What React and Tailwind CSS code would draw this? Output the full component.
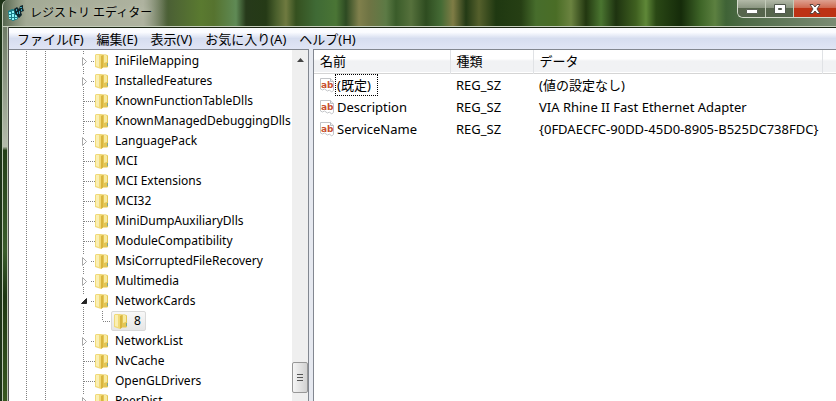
import clsx from 'clsx';

const treeItems = [
   { name: 'IniFileMapping', state: 'closed' },
   { name: 'InstalledFeatures', state: 'closed' },
   { name: 'KnownFunctionTableDlls' },
   { name: 'KnownManagedDebuggingDlls' },
   { name: 'LanguagePack', state: 'closed' },
   { name: 'MCI' },
   { name: 'MCI Extensions' },
   { name: 'MCI32' },
   { name: 'MiniDumpAuxiliaryDlls' },
   { name: 'ModuleCompatibility' },
   { name: 'MsiCorruptedFileRecovery', state: 'closed' },
   { name: 'Multimedia', state: 'closed' },
   { name: 'NetworkCards', state: 'open' },
   { name: '8', child: true },
   { name: 'NetworkList', state: 'closed' },
   { name: 'NvCache' },
   { name: 'OpenGLDrivers' },
   { name: 'PeerDist', state: 'closed' },
];

const values = [
   { name: '(既定)', type: 'REG_SZ', data: '(値の設定なし)', focused: true },
   { name: 'Description', type: 'REG_SZ', data: 'VIA Rhine II Fast Ethernet Adapter' },
   { name: 'ServiceName', type: 'REG_SZ', data: '{0FDAECFC-90DD-45D0-8905-B525DC738FDC}' },
];

const menus = ['ファイル(F)', '編集(E)', '表示(V)', 'お気に入り(A)', 'ヘルプ(H)'];

const RegeditIcon = () => (
   <svg className="w-4 h-4 shrink-0" viewBox="0 0 16 16" aria-hidden="true">
      <path d="M0 6l4-2 5 1 1 9-5 2-4-2z" fill="#1b7f8a" />
      <path d="M1 7h2v2H1zM4 6h2v2H4zM1 10h2v2H1zM4 9h2v3H4zM7 10h2v2H7zM1 13h2v1H1zM4 13h2v2H4zM7 13h2v1H7z" fill="#8df6fa" />
      <path d="M6 4l3-2 2 2 1-3 3-1v3l1 3-3 1 1 3-3 3-2-2-2-3z" fill="#10282f" />
      <path d="M8 4h1v2H8zM12 2h2v1h-2zM11 6h1v3h-1zM13 4h1v2h-1zM9 7h1v2H9z" fill="#3fa9bb" />
   </svg>
);

const Folder = () => (
   <svg className="w-[14px] h-4 shrink-0" viewBox="0 0 14 16" aria-hidden="true">
      <path d="M6 1.500h5l2 1V14l-1 .5H6z" fill="#e4c655" />
      <path d="M9 2h2l1 1v6l-3 1z" fill="#f7eaa0" />
      <path d="M0 2l1-1h5l2 1v12.500L6 16l-6-2z" fill="#f1da78" />
      <path d="M1 2h3v12l-3-1z" fill="#faefb4" />
      <path d="M6 3l2-1v12.500L6 16z" fill="#d9b53f" />
      <path d="M12 10h1v3h-1z" fill="#7fa88a" />
   </svg>
);

const StringIcon = () => (
   <svg className="w-4 h-4 shrink-0" viewBox="0 0 16 16" aria-hidden="true">
      <path d="M1.500 1.500h10l3 3v9l-2 1.500-2-2-2 1-3-2-2 1-2-1z" fill="#fff" stroke="#c3c5c8" />
      <path d="M11.500 1.500v3h3" fill="#eee" stroke="#b9bcc0" />
      <text x="2" y="11" className="font-['DejaVu_Sans'] text-[9px] font-bold" fill="#c8502f">ab</text>
   </svg>
);

// Dotted guide lines and the expander in front of each key
const Guides = ({ state, child }) => (
   <svg
      className={clsx('h-5 shrink-0', child ? 'w-[102px]' : 'w-[86px]')}
      viewBox={child ? '0 0 102 20' : '0 0 86 20'}
      aria-hidden="true"
   >
      <g stroke="#808080" strokeDasharray="1 1" fill="none">
         <path d="M17.500 0v20M36.500 0v20" />
         {state ? <path d="M74.500 0v4M74.500 16v4M82 10.500h4" /> : <path d="M74.500 0v20" />}
         {!state && !child && <path d="M75 10.500h11" />}
         {child && <path d="M93.500 0v10M94 10.500h8" />}
      </g>
      {state === 'closed' && <path d="M73.500 6.500l4 4-4 4z" fill="#fff" stroke="#a6a6a6" />}
      {state === 'open' && <path d="M77.500 7.500v5h-5z" fill="#262626" stroke="#262626" />}
   </svg>
);

const TreeRow = ({ name, state, child }) => (
   <li className="flex h-5 items-center whitespace-nowrap">
      <Guides state={state} child={child} />
      <button
         className={clsx(
            'flex h-5 items-center gap-1.5',
            child && 'rounded-xs border border-[#d9d9d9] bg-linear-to-b from-[#f8f8f8] to-[#e6e6e6] pl-0.5 pr-1'
         )}
      >
         <Folder />
         {name}
      </button>
   </li>
);

const TitleBar = () => (
   <header className="ml-0.5 flex h-[27px] shrink-0 items-start justify-between overflow-hidden rounded-tl-md border-b border-l border-[#c5cdbb] bg-[linear-gradient(90deg,#56674f_0px,#68755c_20px,#6f7c60_140px,#4a5e35_163px,#5a7a30_198px,#56732f_211px,#5f8a55_233px,#26391a_243px,#253a16_263px,#4a5f2c_273px,#6f7a40_283px,#35501f_293px,#3f6a35_313px,#4a7535_333px,#2d4a22_343px,#80804c_356px,#6f7444_366px,#5c7a45_383px,#3a5c2a_393px,#56713c_408px,#2e4c20_423px,#456b35_438px,#7f7c45_450px,#233a15_463px,#55602c_476px,#1f3811_493px,#263f14_518px,#476d2c_533px,#4a6d26_553px,#6b8340_568px,#223710_583px,#4a7530_598px,#1e3310_613px,#3f6020_633px,#5f8838_643px,#2a4815_653px,#152b0a_678px,#3f6628_698px,#5c8040_712px,#3f6336_723px,#4f6b48_743px,#7c8c74_834px)]">
      <div className="flex h-[26px] items-center gap-1.5 bg-[linear-gradient(90deg,transparent_0%,#a3aa95_14%,#aeb29f_85%,transparent_100%)] pl-[5px] pr-4">
         <RegeditIcon />
         <h1 className="text-[12px] [text-shadow:0_0_6px_#d5d8c8]">レジストリ エディター</h1>
      </div>
      <div className="flex h-[18px] overflow-hidden rounded-bl-md border-b border-l border-[#d5dbcd]">
         <button aria-label="最小化" className="flex w-7 items-center justify-center border-r border-[#c3cbb9] bg-linear-to-b from-[#b3baa8] from-0% via-[#8d9783] via-45% to-[#56654c] to-50%">
            <svg className="mt-1 h-3 w-3" viewBox="0 0 12 12"><path d="M.5 4.500h11v4H.5z" fill="#fff" stroke="#5b6356" /></svg>
         </button>
         <button aria-label="最大化" className="flex w-7 items-center justify-center border-r border-[#c3cbb9] bg-linear-to-b from-[#b3baa8] from-0% via-[#8d9783] via-45% to-[#56654c] to-50%">
            <svg className="h-3 w-3" viewBox="0 0 12 12"><path d="M.5 1.500h11v9H.5z M4.500 5.500v1h3v-1z" fill="#fff" stroke="#50584c" fillRule="evenodd" /></svg>
         </button>
         <button aria-label="閉じる" className="flex w-[42px] items-center justify-center bg-linear-to-b from-[#dda090] from-0% via-[#cf6a52] via-45% to-[#bd3214] to-50%">
            <svg className="h-3 w-3" viewBox="0 0 12 12"><path d="M1 1.500h3l2 2.500 2-2.500h3L8 6l3 4.500H8L6 8l-2 2.500H1L4 6z" fill="#fff" stroke="#5b4540" /></svg>
         </button>
      </div>
   </header>
);

const MenuBar = () => (
   <nav className="flex h-[22px] shrink-0 items-center gap-[13px] border-t border-[#1b2614] bg-linear-to-b from-[#fbfcff] from-20% via-[#d6ddef] via-50% to-[#e0e5f5] pl-2">
      {menus.map((menu) => (
         <button key={menu} className="whitespace-nowrap">{menu}</button>
      ))}
   </nav>
);

const ScrollBar = () => (
   <div className="flex w-4 shrink-0 flex-col justify-between bg-[#efefef] pb-2">
      <button aria-label="上へスクロール" className="flex h-5 items-center justify-center">
         <svg className="h-1 w-[7px]" viewBox="0 0 7 4"><path d="M0 4l3.500-4L7 4z" fill="#444" /></svg>
      </button>
      <button aria-label="スクロール位置" className="flex h-[31px] items-center justify-center rounded-xs border border-[#979797] bg-linear-to-r from-[#f5f5f5] to-[#d2d2d2]">
         <svg className="h-2 w-2" viewBox="0 0 8 8"><path d="M1 .5h6M1 3.500h6M1 6.500h6" stroke="#555" /></svg>
      </button>
   </div>
);

const ValueTable = () => (
   <table className="w-full table-fixed border-collapse text-left">
      <colgroup>
         <col className="w-[136px]" />
         <col className="w-[83px]" />
         <col className="w-[289px]" />
         <col />
      </colgroup>
      <thead>
         <tr className="h-[23px] border-b border-[#d5d5d5] bg-linear-to-b from-white from-40% to-[#f1f2f4] to-50%">
            {['名前', '種類', 'データ'].map((title) => (
               <th key={title} className="border-r border-[#e0e2e5] p-0 pl-1.5 font-normal">{title}</th>
            ))}
            <td />
         </tr>
      </thead>
      <tbody>
         {values.map((value) => (
            <tr key={value.name} className="h-[22px] whitespace-nowrap">
               <td className="p-0 pl-[5px]">
                  <div className="flex items-center">
                     <StringIcon />
                     <span className={clsx('h-[22px] border border-dotted px-px leading-5', value.focused ? 'border-black pr-1.5' : 'border-transparent')}>
                        {value.name}
                     </span>
                  </div>
               </td>
               <td className="p-0 pl-1.5">{value.type}</td>
               <td className="p-0 pl-1.5">{value.data}</td>
               <td />
            </tr>
         ))}
      </tbody>
   </table>
);

const App = () => {
   return (
      <div className="flex h-screen flex-col overflow-hidden bg-[#1d3317] font-['Noto_Sans','Noto_Sans_CJK_JP',sans-serif] text-[13px] leading-5 text-black">
         <TitleBar />
         <div className="flex min-h-0 flex-1">
            <div className="flex w-2 shrink-0 pl-0.5">
               <div className="flex-1 border-x border-[#b9c4b0] bg-[linear-gradient(180deg,#6f7c66_0%,#b4bbab_32%,#243f17_33%,#3a5c2c_60%,#1d3612_72%,#38581f_100%)]" />
            </div>
            <div className="flex min-w-0 flex-1 flex-col border-l border-[#555]">
               <MenuBar />
               <main className="flex min-h-0 flex-1 gap-1 bg-[#e6e9f0]">
                  <section className="flex w-[300px] shrink-0 overflow-hidden border-t border-r border-[#828790] bg-white">
                     <ul className="min-w-0 flex-1 overflow-hidden pt-px text-[12px]">
                        {treeItems.map((item) => <TreeRow key={item.name} {...item} />)}
                     </ul>
                     <ScrollBar />
                  </section>
                  <section className="min-w-0 flex-1 overflow-hidden border-t border-l border-[#828790] bg-white">
                     <ValueTable />
                  </section>
               </main>
            </div>
         </div>
      </div>
   );
};

export default App;
